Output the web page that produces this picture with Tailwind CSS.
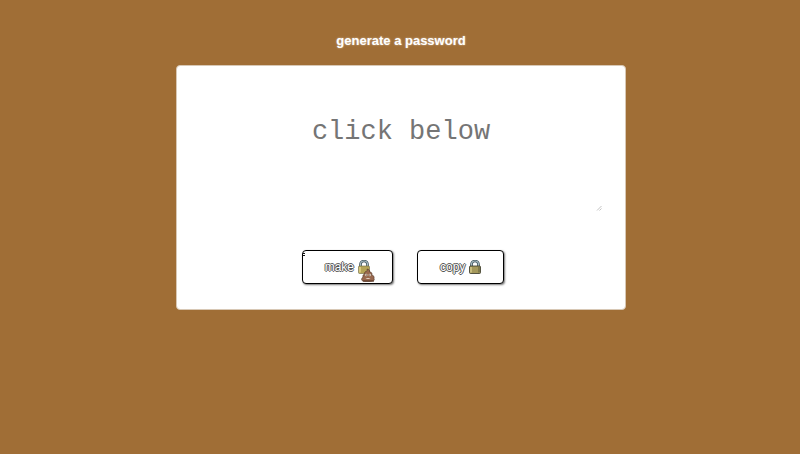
<!DOCTYPE html>
<html lang="en">
<head>
<meta charset="utf-8">
<meta name="viewport" content="width=device-width, initial-scale=1">
<title>generate a password</title>
<script src="https://cdn.jsdelivr.net/npm/@tailwindcss/browser@4"></script>
</head>
<body class="min-h-screen bg-[#a06e36] font-['Liberation_Sans',Arial,sans-serif]">
<main class="mx-auto flex w-[56.5%] flex-col items-center pt-8 pl-0.5">
  <h1 class="text-[13px] leading-[18px] font-bold text-white [text-shadow:0_0_2px_#fff9]"><label for="password">generate a password</label></h1>
  <section class="mt-[15px] w-full rounded border border-[#d8c8b5] bg-white px-5 pt-5 pb-[25px]">
    <div class="relative">
      <textarea id="password" readonly placeholder="click below" class="block h-[126px] w-full resize-none overflow-hidden bg-white pt-[30px] text-center font-['Liberation_Mono','Courier_New',monospace] text-[27px] leading-8 text-[#757575] outline-none placeholder:text-[#757575]"></textarea>
      <svg class="absolute right-0.5 bottom-0 size-2" viewBox="0 0 8 8" fill="none" stroke="#c4c4c4" aria-hidden="true"><path d="M2 6.5 6.500 2M4.500 6.500 6.500 4.500"/></svg>
    </div>
    <div class="mt-[38px] flex justify-center gap-6 pl-1">
      <button type="button" class="relative flex h-[34px] items-center gap-1 rounded border border-black bg-white px-[22px] text-[12px] text-white shadow-[1px_1px_2px_#777] [text-shadow:-1px_0_#555,1px_0_#555,0_-1px_#555,0_1px_#555]">make
        <svg class="h-[14px] w-3" viewBox="0 0 12 14" aria-hidden="true">
          <path d="M2.500 7V4.500a3.500 3.500 0 0 1 7 0V7" fill="none" stroke="#364c55" stroke-width="2.600"/>
          <path d="M2.500 7V4.500a3.500 3.500 0 0 1 7 0V7" fill="none" stroke="#a8bdc4" stroke-width="1.200"/>
          <rect x=".5" y="6" width="11" height="7.500" rx="1" fill="#b5a456" stroke="#6d6840" stroke-width=".6"/>
          <path d="M2 7v5.500" stroke="#d6c77c" stroke-width="2"/>
        </svg>
        <svg class="absolute top-[17px] left-[57px] h-[14px] w-4" viewBox="0 0 16 14" aria-hidden="true">
          <path d="M7 1c2 .4 3 1.300 2.500 2.800 2 .2 3 1.600 2.300 3.200 2 .5 2.700 1.800 2.200 3.300C15 13 13 13.400 10 13.400H4.500c-3 0-4-2.400-1.500-4.400-.5-1.600.2-2.600 1.600-2.800C4.200 4.500 5 3.600 6.500 3.300 7.200 2.700 7.300 1.800 7 1Z" fill="#98684e" stroke="#51382a" stroke-width=".6"/>
          <circle cx="6.300" cy="7" r="1.200" fill="#ddd0c3"/><circle cx="9.800" cy="7" r="1.200" fill="#ddd0c3"/>
          <circle cx="6.400" cy="7" r=".5" fill="#38251c"/><circle cx="9.700" cy="7" r=".5" fill="#38251c"/>
          <path d="M5.500 10h5q-2.500 2.200-5 0" fill="#e7d5c8"/><path d="M3 13h11" stroke="#54301e"/>
        </svg>
        <svg class="absolute top-0 left-0 size-2" viewBox="0 0 8 8" fill="none" stroke="#111" aria-hidden="true"><path d="M0 2.500h2M0 4.500h2"/></svg>
      </button>
      <button type="button" class="flex h-[34px] items-center gap-1 rounded border border-black bg-white px-[22px] text-[12px] text-white shadow-[1px_1px_2px_#777] [text-shadow:-1px_0_#555,1px_0_#555,0_-1px_#555,0_1px_#555]">copy
        <svg class="h-[14px] w-3" viewBox="0 0 12 14" aria-hidden="true">
          <path d="M2.500 7V4.500a3.500 3.500 0 0 1 7 0V7" fill="none" stroke="#364c55" stroke-width="2.600"/>
          <path d="M2.500 7V4.500a3.500 3.500 0 0 1 7 0V7" fill="none" stroke="#a8bdc4" stroke-width="1.200"/>
          <rect x=".5" y="6" width="11" height="7.500" rx="1" fill="#a4985b" stroke="#343325" stroke-width=".8"/>
          <path d="M2 7v5.500" stroke="#c8bd7f" stroke-width="2"/><path d="M10 7v5.500" stroke="#747047" stroke-width="1.500"/>
        </svg>
      </button>
    </div>
  </section>
</main>
</body>
</html>
